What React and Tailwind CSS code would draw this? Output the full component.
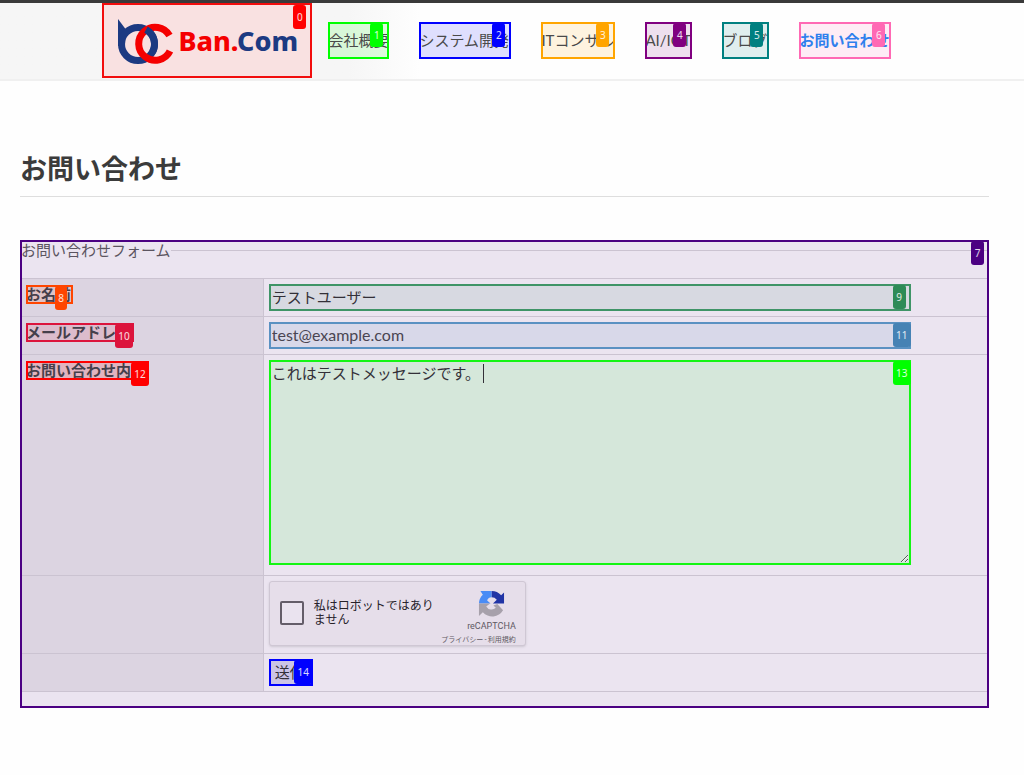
const sans = "font-['Lato','Noto_Sans_CJK_JP',sans-serif]";

function Badge({ n, className }) {
  return (
    <span
      aria-hidden="true"
      className={`pointer-events-none absolute z-10 flex h-6 items-center justify-center rounded-[3px] font-['Noto_Sans',sans-serif] text-[10px] font-normal text-white/85 ${className}`}
    >
      {n}
    </span>
  );
}

const navItems = [
  { n: 1, text: "会社概要", box: "w-[61px] outline-[#00ff00] bg-[#00ff00]/12", badge: "bg-[#00ff00]" },
  { n: 2, text: "システム開発", box: "w-[92px] outline-[#0000ff] bg-[#0000ff]/12", badge: "bg-[#0000ff]" },
  { n: 3, text: "ITコンサル", box: "w-[74px] outline-[#ffa500] bg-[#ffa500]/12", badge: "bg-[#ffa500]" },
  { n: 4, text: "AI/IOT", box: "w-[47px] outline-[#800080] bg-[#800080]/12", badge: "bg-[#800080]" },
  { n: 5, text: "ブログ", box: "w-[47px] outline-[#008080] bg-[#008080]/12", badge: "bg-[#008080]" },
  { n: 6, text: "お問い合わせ", box: "w-[92px] outline-[#ff69b4] bg-[#ff69b4]/12 font-bold text-[#2f80ed]", badge: "bg-[#ff69b4]" },
];

function Logo() {
  return (
    <a
      href="#top"
      aria-label="Ban.Com"
      className="relative flex h-[75px] w-[210px] shrink-0 items-center gap-[3px] border-2 border-[#f20d0d] bg-[#f9e1e1] pl-[11px]"
    >
      <svg viewBox="0 0 60 52" className="h-[52px] w-[60px] shrink-0" fill="none">
        <path d="M3 4 L10.500 14 L10 31 L3 31 Z" fill="#1c3a82" />
        <circle cx="23" cy="29" r="16.500" stroke="#1c3a82" strokeWidth="7" />
        <path d="M54.500 20.500 A16.500 16.500 0 1 0 55 36" stroke="#f50000" strokeWidth="7" />
        <path d="M31 14.600 A16.500 16.500 0 0 1 37.500 37" stroke="#1c3a82" strokeWidth="7" />
      </svg>
      <span className="font-['Noto_Sans',sans-serif] text-[27px] font-extrabold leading-8 text-[#f50000]">
        Ban.<span className="text-[#1c3a82]">Com</span>
      </span>
      <Badge n={0} className="right-1 top-0 w-[13px] bg-[#ff0000]" />
    </a>
  );
}

function Recaptcha() {
  return (
    <div className="flex h-[65px] w-[257px] justify-between rounded-[3px] border border-[#cfc7d4] bg-[#e6deea] pl-[10px] pr-[9px] shadow-sm">
      <div className="flex items-center gap-[10px] pb-px">
        <input
          id="robot"
          type="checkbox"
          className="size-6 appearance-none rounded-[2px] border-2 border-[#645d69] bg-[#eae3ef] checked:bg-[#4a79d8]"
        />
        <label htmlFor="robot" className="w-[122px] text-[12px] leading-[14px] text-[#26222a]">
          私はロボットではありません
        </label>
      </div>
      <div className="-ml-6 flex flex-col items-end pt-2 text-[#5f5963]">
        <svg viewBox="0 0 28 28" className="mr-[11px] size-[27px]">
          <path d="M14 1 A13 13 0 0 1 24 5.500 L27 2.500 V14 H15.500 L19.500 10 A7 7 0 0 0 14 7.500 Z" fill="#2134a5" />
          <path d="M14 1 V7.500 C11.500 7.500 10 9 9.500 11 L13 14 H1 A13 13 0 0 1 5 5 L2.500 1 Z" fill="#4a8cf5" />
          <path d="M1 14 L12.500 14 L8.500 17 A6.500 6.500 0 0 0 18.500 18.500 L16 16 L20 14.500 L26 21 A13 13 0 0 1 5 23 L1 27 Z" fill="#a7a1ab" />
        </svg>
        <span className="font-['Roboto',sans-serif] text-[9px] leading-[19px]">reCAPTCHA</span>
        <span className="flex gap-px whitespace-nowrap text-[7px] leading-[7px]">
          <a href="#privacy">プライバシー</a>
          <span>-</span>
          <a href="#terms">利用規約</a>
        </span>
      </div>
    </div>
  );
}

const rowLine = "border-y border-[#cbc3d1]";
const thClass = `w-1/4 border-r ${rowLine} bg-[#dcd4e1] pl-1 pr-[5px] pt-[6px] text-left align-top font-bold text-[#463f4b]`;
const tdClass = `${rowLine} px-[5px] py-[5px] align-top`;
const labelClass = "relative flex h-[19px] items-center whitespace-nowrap leading-[19px] outline-2 -outline-offset-2";

export default function App() {
  return (
    <div id="top" className={`min-h-screen bg-[#fefefe] text-[15px] text-[#4a4a4a] ${sans}`}>
      <header className="flex items-start border-b-2 border-t-[3px] border-b-[#f0f0f0] border-t-[#3a3a3a] bg-linear-to-r from-[#f6f6f6] from-34% to-[#fefefe] to-41% pl-[10%]">
        <Logo />
        <nav className="flex gap-[30px] pb-5 pl-4 pt-[19px]">
          {navItems.map((i) => (
            <a
              key={i.n}
              href={`#page-${i.n}`}
              className={`relative flex h-[37px] items-center whitespace-nowrap pb-px outline-2 -outline-offset-2 ${i.box}`}
            >
              {i.text}
              <Badge n={i.n} className={`right-[6px] top-px w-[13px] ${i.badge}`} />
            </a>
          ))}
        </nav>
      </header>

      <main className="pl-5 pr-[35px] pt-[68px]">
        <h1 className="border-b border-[#dedede] pb-[7px] text-[27px] font-bold leading-[40px] text-[#3b3b3b]">
          お問い合わせ
        </h1>

        <form
          onSubmit={(e) => e.preventDefault()}
          className="relative mt-[43px] bg-[#ebe4f0] px-px pb-4 pt-px outline-2 -outline-offset-2 outline-[#4b0082]"
        >
          <Badge n={7} className="right-[5px] top-px w-[13px] bg-[#4b0082]" />
          <fieldset className="min-w-0">
            <legend className="flex w-full items-center pb-[19px] leading-[18px] text-[#5b5460]">
              お問い合わせフォーム
              <span className="h-px flex-1 bg-[#cbc3d1]" />
            </legend>
            <div className="px-px">
              <table className="w-full table-fixed border-collapse">
                <tbody>
                  <tr className="h-[38px]">
                    <th scope="row" className={thClass}>
                      <label htmlFor="name" className={`${labelClass} w-[47px] bg-[#ff4500]/12 outline-[#ff4500]`}>
                        お名前
                        <Badge n={8} className="right-[6px] top-px w-3 bg-[#ff4500]" />
                      </label>
                    </th>
                    <td className={tdClass}>
                      <div className="relative w-[90%]">
                        <input id="name" type="text" defaultValue="テストユーザー" className="block h-[27px] w-full border-2 border-[#3f9467] bg-[#d7d9e1] px-px pb-[3px] text-[#333038]" />
                        <Badge n={9} className="right-[5px] top-px w-[13px] bg-[#2e8b57]" />
                      </div>
                    </td>
                  </tr>
                  <tr className="h-[38px]">
                    <th scope="row" className={thClass}>
                      <label htmlFor="email" className={`${labelClass} w-[108px] bg-[#dc143c]/12 outline-[#dc143c]`}>
                        メールアドレス
                        <Badge n={10} className="right-px top-px w-[18px] bg-[#dc143c]" />
                      </label>
                    </th>
                    <td className={tdClass}>
                      <div className="relative w-[90%]">
                        <input id="email" type="email" defaultValue="test@example.com" className="block h-[27px] w-full border-2 border-[#5a91c2] bg-[#d8d8e9] px-px pb-[3px] text-base text-[#4a4552]" />
                        <Badge n={11} className="right-0 top-px w-[18px] bg-[#4682b4]" />
                      </div>
                    </td>
                  </tr>
                  <tr className="h-[221px]">
                    <th scope="row" className={thClass}>
                      <label htmlFor="message" className={`${labelClass} w-[123px] bg-[#ff0000]/15 outline-[#ff0000]`}>
                        お問い合わせ内容
                        <Badge n={12} className="right-0 top-px w-[18px] bg-[#ff0000]" />
                      </label>
                    </th>
                    <td className={tdClass}>
                      <div className="relative w-[90%]">
                        <textarea id="message" defaultValue="これはテストメッセージです。" className="block h-[205px] w-full border-2 border-[#14f514] bg-[#d5e7da] px-px leading-[22px] text-[#333038]" />
                        <span aria-hidden="true" className="absolute left-[214px] top-1 h-[19px] w-px bg-[#333038]" />
                        <Badge n={13} className="right-0 top-px w-[18px] bg-[#00ff00]" />
                      </div>
                    </td>
                  </tr>
                  <tr className="h-[78px]">
                    <th className={thClass} />
                    <td className={tdClass}>
                      <Recaptcha />
                    </td>
                  </tr>
                  <tr className="h-[38px]">
                    <th className={thClass} />
                    <td className={tdClass}>
                      <button type="submit" className="relative flex h-[27px] w-[44px] items-center whitespace-nowrap bg-[#cbc4e6] pl-[6px] text-[#333038] outline-2 -outline-offset-2 outline-[#0000ff]">
                        送信
                        <Badge n={14} className="right-0 top-px w-[19px] bg-[#0000ff]" />
                      </button>
                    </td>
                  </tr>
                </tbody>
              </table>
            </div>
          </fieldset>
        </form>
      </main>
    </div>
  );
}
